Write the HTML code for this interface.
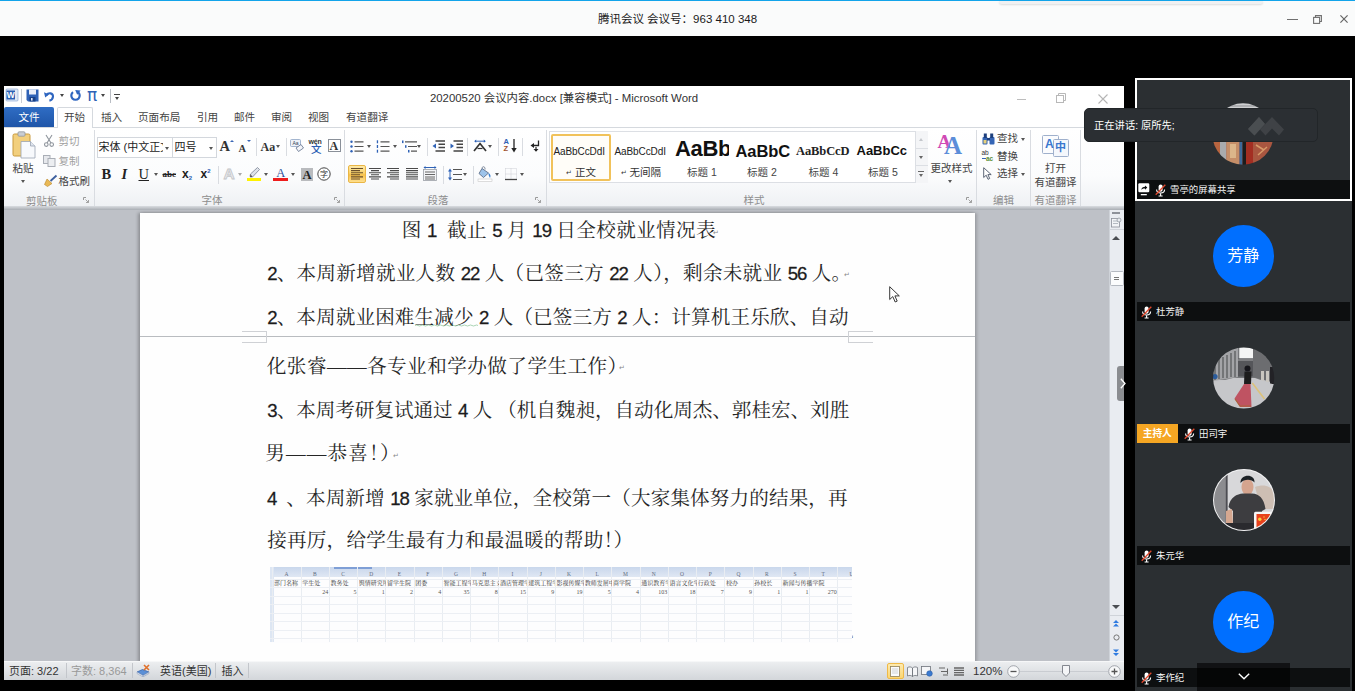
<!DOCTYPE html>
<html lang="zh-CN">
<head>
<meta charset="utf-8">
<title>腾讯会议</title>
<style>
*{box-sizing:border-box;margin:0;padding:0}
html,body{width:1355px;height:691px;overflow:hidden;background:#000}
body{position:relative;font-family:"Liberation Sans","Noto Sans CJK SC",sans-serif;color:#222}
.abs{position:absolute}
/* ---------- Tencent meeting title bar ---------- */
#tbar{position:absolute;left:0;top:0;width:1355px;height:36px;background:#fafbfb;border-top:1px solid #12a4ea}
#tbar .ttl{position:absolute;left:0;width:1355px;top:11px;text-align:center;font-size:11.5px;line-height:14px;color:#1a1a1a;letter-spacing:0}
#tbar svg{position:absolute;top:0;left:0}
/* ---------- Word window ---------- */
#word{position:absolute;left:4px;top:86px;width:1120px;height:594px;background:#fff;overflow:hidden}
#wtitle{position:absolute;left:0;top:0;width:1120px;height:21px;background:#fff}
#wtitle .t{position:absolute;left:0;width:1120px;text-align:center;top:4.5px;font-size:11.4px;line-height:14px;color:#333}
#tabs{position:absolute;left:0;top:21px;width:1120px;height:21px;background:#fff;border-bottom:1px solid #d5d9de}
#tabs span{position:absolute;top:3.2px;font-size:10.6px;line-height:14px;color:#444;white-space:nowrap}
#filetab{position:absolute;left:0;top:0;width:50px;height:20px;background:linear-gradient(#2f6dc4,#1f55a8);border-radius:2px 2px 0 0}
#hometab{position:absolute;left:53px;top:0;width:36px;height:22px;background:#fff;border:1px solid #d5d9de;border-bottom:none;border-radius:2px 2px 0 0}
#ribbon{position:absolute;left:0;top:42px;width:1120px;height:80px;background:linear-gradient(#ffffff 0%,#fbfcfd 60%,#eef0f3 100%)}
#ribbon .sep{position:absolute;top:2px;width:1px;height:74px;background:#dde0e4}
#ribbon .gl{position:absolute;top:65px;font-size:11px;line-height:13px;color:#888;white-space:nowrap}
#ribbon .tx{position:absolute;font-size:11.5px;line-height:14px;color:#444;white-space:nowrap}
#ribbot{position:absolute;left:0;top:120px;width:1120px;height:4px;background:linear-gradient(#d9dce0,#a9adb3)}
/* document */
#doc{position:absolute;left:0;top:124px;width:1105px;height:451px;background:#bec1c7}
#page{position:absolute;left:136px;top:3px;width:835px;height:460px;background:#fefefe;box-shadow:-2px 0 3px rgba(0,0,0,.25),2px 0 3px rgba(0,0,0,.18)}
.ln{position:absolute;white-space:nowrap;font-family:"Liberation Serif","Noto Serif CJK SC",serif;font-size:19.6px;line-height:30px;height:30px;color:#262626;font-weight:400}
.ln b.h{font-weight:400;margin-right:-0.5em}
.ln i.d{font-style:normal;font-family:"Liberation Sans",sans-serif;font-size:18.6px;font-weight:400;-webkit-text-stroke:0.28px #1c1c1c;color:#1c1c1c;white-space:pre;letter-spacing:-1px;word-spacing:1.2px}
#vscroll{position:absolute;left:1105px;top:124px;width:15px;height:451px;background:#e9ecf1;border-left:1px solid #cfd3d9}
#status{position:absolute;left:0;top:575px;width:1120px;height:19px;background:linear-gradient(#eceef0,#d3d6da);border-top:1px solid #f6f7f8}
#status span{position:absolute;top:2px;font-size:11px;line-height:14px;color:#333;white-space:nowrap}
/* ---------- side panel ---------- */
#side{position:absolute;left:1134.5px;top:78px;width:217.5px;height:613px;background:#2b2f32;overflow:hidden}
.tile{position:absolute;left:0;width:217.5px;height:122px}
.nb{position:absolute;left:2px;width:213.500px;height:19px;background:#0d0f10;top:102px}
.nb span{position:absolute;top:3px;font-size:9.400px;line-height:13px;color:#f4f4f4;white-space:nowrap;font-weight:400}
.nb .mic{position:absolute}
.host{position:absolute;left:0;top:0;width:41.500px;height:19px;background:#f5a623;color:#fff;font-size:9.700px;line-height:19px;text-align:center;font-weight:700}
.avs{position:absolute}
.av{position:absolute;left:78px;top:147px;width:61.500px;height:61.500px;border-radius:50%;overflow:hidden}
.av.blue{top:25px;background:#006fff;color:#fff;font-size:16px;line-height:62px;text-align:center}
#t1b{position:absolute;left:0;top:0;width:217.500px;height:122.500px;border:2px solid #fff}
#more{position:absolute;left:62px;top:585px;width:93.500px;height:28px;background:rgba(0,0,0,.6)}
#tip{position:absolute;left:1083.5px;top:108px;width:234px;height:33.500px;background:#2b2f33;border:1px solid #222629;border-radius:5px;color:#fff;font-size:10.300px;line-height:33px;padding-left:9.500px}
/* ribbon overlay: absolute screen coordinates */
#rb{position:absolute;left:0;top:0;width:1355px;height:691px;pointer-events:none}
#rb .t{position:absolute;font-size:10.5px;line-height:13px;color:#444;white-space:nowrap}
#rb .g{color:#8d8d8d}
#rb .s{position:absolute;width:1px;background:#d9dce1}
#rb svg{position:absolute;overflow:visible}
#rb .ar{position:absolute;width:0;height:0;border-left:2.5px solid transparent;border-right:2.5px solid transparent;border-top:3px solid #555}
#rb .bx{position:absolute}

#pgline{position:absolute;left:140px;top:336px;width:835px;height:1px;background:#b9bcc0}
.crop{position:absolute;height:7px;border:1px solid #c6c8cc;border-top:none;background:transparent}
#vs .b{position:absolute}
.pm{font-size:7px;line-height:8px;color:#888;font-family:"DejaVu Sans",sans-serif}
</style>
</head>
<body>
<!-- Tencent Meeting title bar -->
<div id="tbar">
  <div class="ttl">腾讯会议 会议号：963 410 348</div>
  <div style="position:absolute;left:999px;top:0;width:264px;height:3px;border-radius:0 0 4px 4px;background:#f0f1f2;box-shadow:0 1px 2px rgba(0,0,0,.12)"></div>
  <div style="position:absolute;left:1287px;top:17.500px;width:10.500px;height:1.400px;background:#707070"></div>
  <svg style="left:1313px;top:13.500px" width="9" height="9" viewBox="0 0 9 9"><path d="M2.500 2.300V0.600H8.400V6.500H6.700" fill="none" stroke="#707070" stroke-width="1.100"/><rect x="0.600" y="2.400" width="6" height="6" fill="none" stroke="#707070" stroke-width="1.100"/></svg>
  <svg style="left:1339.500px;top:14px" width="8" height="8" viewBox="0 0 8 8"><path d="M0.400 0.400L7.600 7.600M7.600 0.400L0.400 7.600" stroke="#666" stroke-width="1.200"/></svg>
</div>

<!-- Word window -->
<div id="word">
  <div id="wtitle"><div class="t">20200520 会议内容.docx [兼容模式] - Microsoft Word</div></div>
  <div id="tabs">
    <div id="filetab"></div><div id="hometab"></div>
    <span style="left:14.5px;color:#fff">文件</span>
    <span style="left:60px">开始</span>
    <span style="left:97px">插入</span>
    <span style="left:134px">页面布局</span>
    <span style="left:193px">引用</span>
    <span style="left:230px">邮件</span>
    <span style="left:267px">审阅</span>
    <span style="left:304px">视图</span>
    <span style="left:342px">有道翻译</span>
  </div>
  <div id="ribbon"></div>
  <div id="ribbot"></div>
  <div id="doc">
    <div id="page"></div>
  </div>
  <div id="vscroll"></div>
  <div id="status">
    <span style="left:5px">页面: 3/22</span>
    <span style="left:67px;color:#999">字数: 8,364</span>
    <span style="left:156px">英语(美国)</span>
    <span style="left:217.5px">插入</span>
  </div>
</div>

<!-- ribbon overlay -->
<div id="rb">
  <!-- quick access toolbar -->
  <svg style="left:6px;top:88.5px" width="12" height="12" viewBox="0 0 12 12"><rect x="0" y="0" width="12" height="12" rx="1" fill="#dfe8f5" stroke="#7f9fd0" stroke-width=".6"/><rect x="0.5" y="1.5" width="8.5" height="9" fill="#2b5fb4"/><text x="4.7" y="9.3" font-size="8.5" font-weight="700" fill="#fff" text-anchor="middle" font-family="Liberation Sans, sans-serif">W</text></svg>
  <div class="s" style="left:21px;top:89px;height:14px;background:#c9cdd3"></div>
  <svg style="left:25.5px;top:88.5px" width="13" height="13" viewBox="0 0 13 13"><path d="M0.5 0.5H12.5V12.5H2L0.5 11Z" fill="#2f62b6"/><rect x="3" y="0.5" width="7" height="5" fill="#e9eef8"/><rect x="3.5" y="8" width="6" height="4.5" fill="#173f86"/><rect x="5" y="9" width="1.6" height="2.6" fill="#dfe7f5"/></svg>
  <svg style="left:44px;top:90.5px" width="11" height="10" viewBox="0 0 11 10"><path d="M2.2 4.2C4.5 1.2 9.2 1.8 9 5.6C8.8 7.8 7.2 9.2 5.4 9.6" fill="none" stroke="#2f66c0" stroke-width="2.1"/><path d="M0 1.2L5 3.4L1.2 6.6Z" fill="#2f66c0"/></svg>
  <div class="ar" style="left:59.5px;top:94px;border-top-color:#444"></div>
  <svg style="left:69.5px;top:90px" width="11" height="11" viewBox="0 0 11 11"><path d="M3 2.2A4.2 4.2 0 1 0 8 2.2" fill="none" stroke="#2f66c0" stroke-width="2.2"/><path d="M5.2 0L10.6 0.6L7.2 4.8Z" fill="#2f66c0"/></svg>
  <div class="t" style="left:87px;top:86.5px;font-size:17px;line-height:17px;color:#2f62b6;font-weight:400;font-family:'DejaVu Sans','Liberation Sans',sans-serif">π</div>
  <div class="ar" style="left:101px;top:94px;border-top-color:#444"></div>
  <div class="s" style="left:109.5px;top:89px;height:14px;background:#b9bdc4"></div>
  <div class="bx" style="left:114px;top:94px;width:6px;height:1.2px;background:#444"></div>
  <div class="ar" style="left:114.5px;top:96.5px;border-top-color:#444"></div>

  <!-- window controls of Word -->
  <div class="bx" style="left:1017px;top:98.5px;width:9px;height:1px;background:#bdbdbd"></div>
  <svg style="left:1056px;top:93px" width="10" height="10" viewBox="0 0 10 10"><rect x="0.5" y="2.5" width="7" height="7" fill="#fff" stroke="#b8b8b8"/><path d="M2.5 2.5V0.5H9.5V7.5H7.5" fill="none" stroke="#b8b8b8"/></svg>
  <svg style="left:1098px;top:94px" width="10" height="10" viewBox="0 0 10 10"><path d="M0.5 0.5L9.5 9.5M9.5 0.5L0.5 9.5" stroke="#b5b5b5" stroke-width="1.1"/></svg>

  <!-- clipboard group -->
  <svg style="left:12px;top:131px" width="24" height="28" viewBox="0 0 24 28"><rect x="1" y="3" width="17" height="22" rx="1.5" fill="#f2cf7d" stroke="#c99a3c"/><rect x="6" y="0.8" width="7" height="4.4" rx="1" fill="#c9cdd3" stroke="#8a8f98" stroke-width=".7"/><path d="M9 10.5H18.5L23 15V27H9Z" fill="#f7f9fc" stroke="#9aa3b3" stroke-width=".8"/><path d="M18.5 10.5V15H23" fill="#dfe5ee" stroke="#9aa3b3" stroke-width=".8"/></svg>
  <div class="t" style="left:12.5px;top:162px">粘贴</div>
  <div class="ar" style="left:21px;top:180px"></div>
  <svg style="left:44px;top:135px" width="10" height="12" viewBox="0 0 10 12"><path d="M2 0L7 8M8 0L3 8" stroke="#8e949c" stroke-width="1.1" fill="none"/><circle cx="2.3" cy="9.6" r="1.8" fill="none" stroke="#8e949c" stroke-width="1.1"/><circle cx="7.7" cy="9.6" r="1.8" fill="none" stroke="#8e949c" stroke-width="1.1"/></svg>
  <div class="t g" style="left:58.5px;top:134.5px;color:#a0a0a0">剪切</div>
  <svg style="left:43px;top:155px" width="13" height="12" viewBox="0 0 13 12"><rect x="0.5" y="0.5" width="6.5" height="8" fill="#e6e8ec" stroke="#a9aeb6"/><rect x="5" y="3.5" width="7" height="8" fill="#eceef1" stroke="#a9aeb6"/></svg>
  <div class="t g" style="left:58.5px;top:155px;color:#a0a0a0">复制</div>
  <svg style="left:44px;top:174.500px" width="13" height="12" viewBox="0 0 13 12"><path d="M12.5 0.5L6.5 6" stroke="#3c5f9e" stroke-width="1.8"/><path d="M3 4L8 8.5L3.5 11.5L0.5 9.5Z" fill="#e9b956" stroke="#b88426" stroke-width=".6"/></svg>
  <div class="t" style="left:58.5px;top:174.500px">格式刷</div>
  <div class="t g" style="left:26px;top:194.500px">剪贴板</div>
  <svg class="la" style="left:83px;top:196.500px" width="6" height="6" viewBox="0 0 6 6"><path d="M0.5 3V0.5H3" fill="none" stroke="#9a9a9a"/><path d="M2.5 2.5L5.5 5.5M5.5 3V5.5H3" fill="none" stroke="#9a9a9a" stroke-width=".9"/></svg>
  <div class="s" style="left:93.5px;top:130px;height:76px"></div>

  <!-- font group -->
  <div class="bx" style="left:97px;top:137px;width:120px;height:21px;background:#fff;border:1px solid #d3d7dd"></div>
  <div class="bx" style="left:172px;top:137px;width:1px;height:21px;background:#d3d7dd"></div>
  <div class="t" style="left:98.500px;top:141px;font-size:11px;color:#222">宋体 (中文正文</div>
  <div class="bx" style="left:163px;top:138px;width:9px;height:19px;background:#fff"></div>
  <div class="ar" style="left:165px;top:146.500px"></div>
  <div class="t" style="left:174.500px;top:141px;font-size:11px;color:#222">四号</div>
  <div class="ar" style="left:209px;top:146.500px"></div>
  <div class="t" style="left:219.500px;top:138px;font-family:'Liberation Serif',serif;font-weight:700;font-size:14.500px;line-height:17px;color:#333">A</div>
  <div class="bx" style="left:229.500px;top:139.500px;width:0;height:0;border-left:2px solid transparent;border-right:2px solid transparent;border-bottom:2.5px solid #3a66b5"></div>
  <div class="t" style="left:238.500px;top:141.500px;font-family:'Liberation Serif',serif;font-weight:700;font-size:10.500px;line-height:13px;color:#333">A</div>
  <div class="bx" style="left:246.500px;top:139.500px;width:0;height:0;border-left:2px solid transparent;border-right:2px solid transparent;border-top:2.5px solid #3a66b5"></div>
  <div class="s" style="left:255.500px;top:138px;height:18px"></div>
  <div class="t" style="left:260.500px;top:139.500px;font-family:'Liberation Serif',serif;font-weight:700;font-size:12px;line-height:15px;color:#333">Aa</div>
  <div class="ar" style="left:275.500px;top:145px"></div>
  <div class="s" style="left:285.500px;top:138px;height:18px"></div>
  <svg style="left:290px;top:138.500px" width="14" height="14" viewBox="0 0 14 14"><rect x="0.5" y="0.5" width="10" height="7" rx="1" fill="#eef2f8" stroke="#8ea3c4" stroke-width=".8"/><text x="5.500" y="6" font-size="5" text-anchor="middle" fill="#345" font-family="Liberation Sans, sans-serif">Aa</text><path d="M6 9L11 5.500L13.500 9L8.500 12.500Z" fill="#f4f6fa" stroke="#6d7c95" stroke-width=".9"/></svg>
  <div class="t" style="left:308.500px;top:137.500px;font-size:7px;line-height:8px;color:#333;font-weight:700;letter-spacing:-.2px">wén</div>
  <div class="t" style="left:311px;top:143.500px;font-size:10.500px;line-height:11px;color:#2b5fb4;font-weight:500">文</div>
  <div class="bx" style="left:327.500px;top:139px;width:13px;height:13px;border:1px solid #8a9099;background:#fff"></div>
  <div class="t" style="left:329.500px;top:138.500px;font-family:'Liberation Serif',serif;font-weight:700;font-size:12px;line-height:14px;color:#333">A</div>

  <div class="t" style="left:101.500px;top:165px;font-family:'Liberation Serif',serif;font-weight:700;font-size:14.500px;line-height:18px;color:#222">B</div>
  <div class="t" style="left:121.500px;top:165px;font-family:'Liberation Serif',serif;font-style:italic;font-weight:700;font-size:14.500px;line-height:18px;color:#222">I</div>
  <div class="t" style="left:138.500px;top:165px;font-family:'Liberation Serif',serif;font-size:14.500px;line-height:18px;color:#222;text-decoration:underline">U</div>
  <div class="ar" style="left:153.500px;top:173px"></div>
  <div class="t" style="left:162.500px;top:168px;font-family:'Liberation Serif',serif;font-weight:700;font-size:9px;line-height:12px;color:#222;text-decoration:line-through">abc</div>
  <div class="t" style="left:182px;top:167px;font-weight:700;font-size:12px;line-height:14px;color:#222">x<span style="font-size:6px;color:#2b5fb4;position:relative;top:2px">2</span></div>
  <div class="t" style="left:200.500px;top:167px;font-weight:700;font-size:12px;line-height:14px;color:#222">x<span style="font-size:6px;color:#2b5fb4;position:relative;top:-5px">2</span></div>
  <div class="s" style="left:218px;top:166px;height:18px"></div>
  <div class="t" style="left:223.500px;top:164.500px;font-weight:700;font-size:15.500px;line-height:18px;color:#e9eaec;-webkit-text-stroke:0.8px #c4c6ca">A</div>
  <div class="ar" style="left:238px;top:173px;border-top-color:#aaa"></div>
  <svg style="left:247px;top:166.500px" width="14" height="11" viewBox="0 0 14 11"><path d="M3 9.500L5.500 10L12.500 2.500L10.500 0.500L3.500 7Z" fill="#dfe3ea" stroke="#7b8494" stroke-width=".8"/><path d="M3.500 7L5.500 10L3 10.200Z" fill="#555"/></svg>
  <div class="bx" style="left:246.500px;top:177.500px;width:14.500px;height:3.500px;background:#fff200"></div>
  <div class="ar" style="left:264px;top:173px"></div>
  <div class="t" style="left:276.300px;top:165.500px;font-family:'Liberation Serif',serif;font-size:12.500px;line-height:14px;color:#2b4f9a">A</div>
  <div class="bx" style="left:273px;top:177.500px;width:14.500px;height:3.500px;background:#ee1c1c"></div>
  <div class="ar" style="left:290.500px;top:173px"></div>
  <div class="bx" style="left:300.500px;top:168px;width:12.500px;height:13px;background:#b9bbbe"></div>
  <div class="t" style="left:302.500px;top:167.500px;font-family:'Liberation Serif',serif;font-weight:700;font-size:12.500px;line-height:14px;color:#222">A</div>
  <svg style="left:317px;top:166.700px" width="14" height="14" viewBox="0 0 14 14"><circle cx="7" cy="7" r="6.200" fill="#fff" stroke="#444" stroke-width="1"/><text x="7" y="10" font-size="8" text-anchor="middle" fill="#333" font-family="Noto Sans CJK SC, sans-serif">字</text></svg>
  <div class="t g" style="left:201.500px;top:194px">字体</div>
  <svg class="la" style="left:334px;top:196.500px" width="6" height="6" viewBox="0 0 6 6"><path d="M0.500 3V0.500H3" fill="none" stroke="#9a9a9a"/><path d="M2.500 2.500L5.500 5.500M5.500 3V5.500H3" fill="none" stroke="#9a9a9a" stroke-width=".9"/></svg>
  <div class="s" style="left:343.500px;top:130px;height:76px"></div>

  <!-- paragraph group -->
  <svg style="left:349.500px;top:139.500px" width="14" height="13" viewBox="0 0 14 13"><g fill="#2f62b6"><circle cx="1.500" cy="1.800" r="1.200"/><circle cx="1.500" cy="6.500" r="1.200"/><circle cx="1.500" cy="11.200" r="1.200"/></g><path d="M4.500 1.800H13.500M4.500 6.500H13.500M4.500 11.200H13.500" stroke="#555" stroke-width="1.200"/></svg>
  <div class="ar" style="left:367px;top:145px"></div>
  <svg style="left:375.500px;top:139.500px" width="14" height="13" viewBox="0 0 14 13"><g fill="#2f62b6"><rect x="0.800" y="0.300" width="1.300" height="3"/><rect x="0.800" y="5" width="1.300" height="3"/><rect x="0.800" y="9.700" width="1.300" height="3"/></g><path d="M4.500 1.800H13.500M4.500 6.500H13.500M4.500 11.200H13.500" stroke="#555" stroke-width="1.200"/></svg>
  <div class="ar" style="left:393px;top:145px"></div>
  <svg style="left:401.500px;top:139.500px" width="16" height="13" viewBox="0 0 16 13"><g fill="#2f62b6"><rect x="0" y="0.500" width="1.500" height="2.600"/><rect x="3" y="5.200" width="1.500" height="2.600"/><rect x="6" y="9.900" width="1.500" height="2.600"/></g><path d="M3 1.800H15M6 6.500H15M9 11.200H15" stroke="#555" stroke-width="1.200"/></svg>
  <div class="ar" style="left:416.500px;top:145px"></div>
  <div class="s" style="left:426.500px;top:138px;height:18px"></div>
  <svg style="left:432px;top:140px" width="13" height="12" viewBox="0 0 13 12"><path d="M3.500 1H13M6.500 4.300H13M6.500 7.600H13M3.500 11H13" stroke="#444" stroke-width="1.500"/><path d="M4 3.500V8.500L0.500 6Z" fill="#2f62b6"/></svg>
  <svg style="left:449.500px;top:140px" width="13" height="12" viewBox="0 0 13 12"><path d="M3.500 1H13M6.500 4.300H13M6.500 7.600H13M3.500 11H13" stroke="#444" stroke-width="1.500"/><path d="M0.500 3.500V8.500L4 6Z" fill="#2f62b6"/></svg>
  <div class="s" style="left:467px;top:138px;height:18px"></div>
  <svg style="left:472.500px;top:139px" width="14" height="13" viewBox="0 0 14 13"><path d="M1 12L7 4.500L13 12" fill="none" stroke="#333" stroke-width="1.700"/><path d="M4.500 9.500H9.500" stroke="#333" stroke-width="1.200"/><path d="M2 2.200H12" stroke="#2f62b6" stroke-width="1"/><path d="M3.200 0.600L1.200 2.200L3.200 3.800ZM10.800 0.600L12.800 2.200L10.800 3.800Z" fill="#2f62b6"/></svg>
  <div class="ar" style="left:488px;top:145px"></div>
  <div class="s" style="left:497.500px;top:138px;height:18px"></div>
  <div class="t" style="left:503.500px;top:137.500px;font-size:7.500px;line-height:8px;font-weight:700;color:#2f62b6">A</div>
  <div class="t" style="left:503.500px;top:145px;font-size:7.500px;line-height:8px;font-weight:700;color:#a0522d">Z</div>
  <svg style="left:510.500px;top:139px" width="6" height="14" viewBox="0 0 6 14"><path d="M3 0V10" stroke="#222" stroke-width="1.300"/><path d="M0.300 9L5.700 9L3 13.500Z" fill="#222"/></svg>
  <div class="s" style="left:522px;top:138px;height:18px"></div>
  <svg style="left:530px;top:140px" width="10" height="12" viewBox="0 0 10 12"><path d="M8.500 0.500V5.500H3" fill="none" stroke="#222" stroke-width="1.300"/><path d="M0.500 5.500L4 3V8Z" fill="#222"/><path d="M6 11V7" stroke="#222" stroke-width="1.200"/><path d="M3.500 9L6 11.800L8.500 9Z" fill="#222"/></svg>

  <div class="bx" style="left:347.500px;top:165px;width:18.500px;height:17.500px;border:1px solid #eab645;border-radius:2px;background:linear-gradient(#fde9a8,#fbd36b 45%,#f9c24a 55%,#fddf8f)"></div>
  <svg style="left:350.500px;top:168px" width="13" height="12" viewBox="0 0 13 12"><path d="M0 0.500H12M0 2.600H9M0 4.700H12M0 6.800H9M0 8.900H12M0 11H9" stroke="#6a4f2a" stroke-width="1.100"/></svg>
  <svg style="left:368.500px;top:168px" width="13" height="12" viewBox="0 0 13 12"><path d="M0 0.500H12M2 2.600H10M0 4.700H12M2 6.800H10M0 8.900H12M2 11H10" stroke="#4a4a4a" stroke-width="1.100"/></svg>
  <svg style="left:387px;top:168px" width="13" height="12" viewBox="0 0 13 12"><path d="M0 0.500H12M3 2.600H12M0 4.700H12M3 6.800H12M0 8.900H12M3 11H12" stroke="#4a4a4a" stroke-width="1.100"/></svg>
  <svg style="left:405.500px;top:168px" width="13" height="12" viewBox="0 0 13 12"><path d="M0 0.500H12M0 2.600H12M0 4.700H12M0 6.800H12M0 8.900H12M0 11H12" stroke="#4a4a4a" stroke-width="1.100"/></svg>
  <svg style="left:423px;top:166px" width="14" height="15" viewBox="0 0 14 15"><rect x="0.500" y="3.500" width="13" height="11" fill="#f3f4f6" stroke="#9a9ea6" stroke-width=".8"/><path d="M2 6H12M2 8.500H12M2 11H12M2 13H12" stroke="#666" stroke-width="1"/><path d="M1 1.500H13" stroke="#2f62b6" stroke-width="1"/><path d="M2.500 0L0.500 1.500L2.500 3ZM11.500 0L13.500 1.500L11.500 3Z" fill="#2f62b6"/></svg>
  <div class="s" style="left:442.500px;top:166px;height:18px"></div>
  <svg style="left:448px;top:167.500px" width="14" height="13" viewBox="0 0 14 13"><path d="M5 1.500H14M5 6.500H14M5 11.500H14" stroke="#555" stroke-width="1.200"/><path d="M2 2.500V10.500" stroke="#2f62b6" stroke-width="1"/><path d="M0 3.500L2 0.500L4 3.500ZM0 9.500L2 12.500L4 9.500Z" fill="#2f62b6"/></svg>
  <div class="ar" style="left:463px;top:173px"></div>
  <div class="s" style="left:472.500px;top:166px;height:18px"></div>
  <svg style="left:477.500px;top:166px" width="15" height="16" viewBox="0 0 15 16"><path d="M4 2.500L10.500 7L5.500 11.500L1 7.500Z" fill="#9cc3ea" stroke="#5f6f8a" stroke-width=".9"/><path d="M4 2.500C4 0 7.500 0 7 3.500" fill="none" stroke="#6f7b8f" stroke-width=".9"/><path d="M10.500 7C12.500 8 13 10 12 12C11 10.500 10.500 9 10.500 7Z" fill="#3a7fd0"/><rect x="0" y="13" width="14" height="2.500" fill="#fff" stroke="#bbb" stroke-width=".5"/></svg>
  <div class="ar" style="left:494.500px;top:173px"></div>
  <svg style="left:504.500px;top:168px" width="12" height="12" viewBox="0 0 12 12"><path d="M0.500 0.500H11.500V11.500M0.500 0.500V11.500M6 0.500V11.500M0.500 6H11.500" fill="none" stroke="#c9ccd2" stroke-width=".9" stroke-dasharray="1 1"/><path d="M0 11.500H12" stroke="#444" stroke-width="1.300"/></svg>
  <div class="ar" style="left:519.500px;top:173px"></div>
  <div class="t g" style="left:427.500px;top:194px">段落</div>
  <svg class="la" style="left:535px;top:196.500px" width="6" height="6" viewBox="0 0 6 6"><path d="M0.500 3V0.500H3" fill="none" stroke="#9a9a9a"/><path d="M2.500 2.500L5.500 5.500M5.500 3V5.500H3" fill="none" stroke="#9a9a9a" stroke-width=".9"/></svg>
  <div class="s" style="left:545.500px;top:130px;height:76px"></div>

  <!-- styles gallery -->
  <div class="bx" style="left:549px;top:130.500px;width:379px;height:52.500px;background:#fff;border:1px solid #dcdfe4"></div>
  <div class="bx" style="left:550.500px;top:134px;width:60px;height:46.500px;border:2px solid #f1c25a;border-radius:2px;background:#fffdf8"></div>
  <div class="t" style="left:553.500px;top:144.500px;font-size:10px;line-height:13px;color:#222;letter-spacing:-.1px">AaBbCcDdI</div>
  <div class="t" style="left:566px;top:166px;color:#333"><span style="font-size:7px;position:relative;top:-1px">↵</span> 正文</div>
  <div class="t" style="left:614.500px;top:144.500px;font-size:10px;line-height:13px;color:#222;letter-spacing:-.1px">AaBbCcDdI</div>
  <div class="t" style="left:620.500px;top:166px;color:#333"><span style="font-size:7px;position:relative;top:-1px">↵</span> 无间隔</div>
  <div class="bx" style="left:674px;top:132px;width:54.500px;height:34px;overflow:hidden"><div class="t" style="left:1px;top:2px;font-size:22px;line-height:30px;font-weight:700;color:#111;letter-spacing:-.3px">AaBb</div></div>
  <div class="t" style="left:687px;top:166px;color:#444">标题 1</div>
  <div class="bx" style="left:734px;top:134px;width:55.500px;height:32px;overflow:hidden"><div class="t" style="left:1.500px;top:5px;font-size:16.500px;line-height:24px;font-weight:700;color:#111;letter-spacing:-.1px">AaBbC</div></div>
  <div class="t" style="left:747px;top:166px;color:#444">标题 2</div>
  <div class="t" style="left:796px;top:143px;font-size:12.500px;line-height:16px;font-weight:700;color:#222;font-family:'Liberation Serif',serif;letter-spacing:-.1px">AaBbCcD</div>
  <div class="t" style="left:808.500px;top:166px;color:#444">标题 4</div>
  <div class="t" style="left:856.500px;top:143px;font-size:13px;line-height:16px;font-weight:700;color:#111">AaBbCc</div>
  <div class="t" style="left:868px;top:166px;color:#444">标题 5</div>
  <div class="bx" style="left:914.500px;top:131px;width:13px;height:51.500px;background:#f4f5f7;border-left:1px solid #dcdfe4"></div>
  <div class="bx" style="left:914.500px;top:148px;width:13px;height:1px;background:#dcdfe4"></div>
  <div class="bx" style="left:914.500px;top:165px;width:13px;height:1px;background:#dcdfe4"></div>
  <div class="bx" style="left:918.500px;top:138px;width:0;height:0;border-left:2.500px solid transparent;border-right:2.500px solid transparent;border-bottom:3px solid #c4c7cc"></div>
  <div class="ar" style="left:918.500px;top:155.500px;border-top-color:#666"></div>
  <div class="bx" style="left:918px;top:171px;width:6px;height:1.200px;background:#666"></div>
  <div class="ar" style="left:918.500px;top:173.500px;border-top-color:#666"></div>
  <!-- change styles -->
  <div class="t" style="left:937.500px;top:131px;font-size:19px;line-height:22px;font-weight:700;color:#d04ab5;font-family:'Liberation Serif',serif">A</div>
  <div class="t" style="left:944px;top:132px;font-size:25px;line-height:28px;font-weight:700;color:#5b8dd9;font-family:'Liberation Serif',serif">A</div>
  <div class="t" style="left:930.500px;top:161.500px">更改样式</div>
  <div class="ar" style="left:948px;top:180px"></div>
  <div class="t g" style="left:743.500px;top:194px">样式</div>
  <svg class="la" style="left:965.500px;top:196.500px" width="6" height="6" viewBox="0 0 6 6"><path d="M0.500 3V0.500H3" fill="none" stroke="#9a9a9a"/><path d="M2.500 2.500L5.500 5.500M5.500 3V5.500H3" fill="none" stroke="#9a9a9a" stroke-width=".9"/></svg>
  <div class="s" style="left:976px;top:130px;height:76px"></div>
  <!-- editing -->
  <svg style="left:981.500px;top:132.500px" width="13" height="12" viewBox="0 0 13 12"><rect x="0.500" y="4" width="5" height="7.500" rx="1" fill="#3565b5"/><rect x="7.500" y="4" width="5" height="7.500" rx="1" fill="#3565b5"/><rect x="1.800" y="0.500" width="3" height="4.500" fill="#1d3f7d"/><rect x="8.200" y="0.500" width="3" height="4.500" fill="#1d3f7d"/><rect x="5" y="5" width="3" height="2.500" fill="#1d3f7d"/><rect x="1.500" y="7" width="3" height="3.500" fill="#e9d27a"/></svg>
  <div class="t" style="left:997px;top:132px">查找</div>
  <div class="ar" style="left:1020.500px;top:137.500px"></div>
  <div class="t" style="left:981.500px;top:149px;font-size:6.500px;line-height:7px;color:#333">ab</div>
  <div class="t" style="left:986px;top:154.500px;font-size:6.500px;line-height:7px;font-weight:700;color:#5a8f3a">ac</div>
  <div class="bx" style="left:982px;top:158px;width:3.500px;height:1px;background:#3565b5"></div>
  <div class="t" style="left:997px;top:149.500px">替换</div>
  <svg style="left:982.500px;top:167px" width="9" height="13" viewBox="0 0 9 13"><path d="M0.700 0.700V10.500L3.200 8.200L5 12.300L6.700 11.500L4.900 7.600H8.200Z" fill="#fff" stroke="#4a5568" stroke-width=".9"/></svg>
  <div class="t" style="left:997px;top:167px">选择</div>
  <div class="ar" style="left:1021px;top:172.500px"></div>
  <div class="t g" style="left:993px;top:194px">编辑</div>
  <div class="s" style="left:1029.500px;top:130px;height:76px"></div>
  <!-- youdao -->
  <div class="bx" style="left:1042px;top:135px;width:17px;height:18.500px;background:#fbfcfe;border:1px solid #9fb0cc;border-radius:1.500px"></div>
  <div class="bx" style="left:1053px;top:138.500px;width:15.500px;height:18px;background:#f4f7fc;border:1px solid #9fb0cc;border-radius:1.500px"></div>
  <div class="t" style="left:1045px;top:137.500px;font-size:12px;line-height:13px;font-weight:700;color:#3a77cf">A</div>
  <div class="t" style="left:1055px;top:140.500px;font-size:11px;line-height:13px;font-weight:700;color:#3a77cf">中</div>
  <div class="t" style="left:1045px;top:162px">打开</div>
  <div class="t" style="left:1034.500px;top:176px">有道翻译</div>
  <div class="t g" style="left:1034.500px;top:194px">有道翻译</div>
  <div class="s" style="left:1080px;top:130px;height:76px"></div>
</div>

<!-- document text (absolute screen coords) -->
<div id="dt">
  <div class="ln" style="left:401.7px;top:216px;letter-spacing:0.358px">图<i class="d"> 1 </i> 截止<i class="d"> 5 </i>月<i class="d"> 19 </i>日全校就业情况表</div>
  <div class="ln" style="left:267.3px;top:259px;letter-spacing:0.258px"><i class="d">2</i>、本周新增就业人数<i class="d"> 22 </i>人（已签三方<i class="d"> 22 </i>人），剩余未就业<i class="d"> 56 </i>人。</div>
  <div class="ln" style="left:267.3px;top:303px;letter-spacing:0.104px"><i class="d">2</i>、本周就业困难生减少<i class="d"> 2 </i>人（已签三方<i class="d"> 2 </i>人：计算机王乐欣、自动</div>
  <div class="ln" style="left:266.8px;top:351.5px;letter-spacing:0.453px">化张睿——各专业和学办做了学生工作）</div>
  <div class="ln" style="left:267.3px;top:396px;letter-spacing:-0.036px"><i class="d">3</i>、本周考研复试通过<i class="d"> 4 </i>人 （机自魏昶，自动化周杰、郭桂宏、刘胜</div>
  <div class="ln" style="left:265.3px;top:439px;letter-spacing:1.15px">男——恭喜<b class="h">！</b>）</div>
  <div class="ln" style="left:267px;top:483.5px;letter-spacing:0.115px"><i class="d" style="margin-right:4.5px">4 </i>、本周新增<i class="d"> 18 </i>家就业单位，全校第一（大家集体努力的结果，再</div>
  <div class="ln" style="left:267.3px;top:526px;letter-spacing:0.178px">接再厉，给学生最有力和最温暖的帮助<b class="h">！</b>）</div>
</div>

<div id="pgline"></div>
<div class="crop" style="left:242px;top:331px;width:24.5px;height:11.5px;border:1px solid #cfd1d5;border-left:none"></div>
<div class="crop" style="left:848px;top:331px;width:25px;height:11.5px;border:1px solid #cfd1d5;border-right:none"></div>
<svg class="abs" style="left:415px;top:324.2px" width="65" height="3" viewBox="0 0 65 3"><path d="M0 1.5 q1.5 -2 3 0 t3 0 t3 0 t3 0 t3 0 t3 0 t3 0 t3 0 t3 0 t3 0 t3 0 t3 0 t3 0 t3 0 t3 0 t3 0 t3 0 t3 0 t3 0 t3 0 t3 0" fill="none" stroke="#5fae72" stroke-width=".7" transform="translate(0 .75) scale(1 .5)"/></svg>
<div class="abs pm" style="left:713px;top:229px">↵</div>
<div class="abs pm" style="left:844px;top:271px">↵</div>
<div class="abs pm" style="left:619px;top:364px">↵</div>
<div class="abs pm" style="left:393px;top:452px">↵</div>
<div class="abs pm" style="left:848px;top:634px;color:#555">↵</div>
<div id="sheet" style="position:absolute;left:270px;top:567px;width:582px;height:75.5px;background:#fdfdfe;overflow:hidden;font-family:'Liberation Serif','Noto Serif CJK SC',serif">
<div style="position:absolute;left:0;top:0;width:582px;height:9.5px;background:linear-gradient(#c9d7ec,#dfe7f3)"></div>
<div style="position:absolute;left:0;top:0;width:4px;height:75px;background:#dde6f3"></div>
<div style="position:absolute;left:64.4px;top:0;width:38px;height:1.5px;background:#7f9fd6"></div>
<div style="position:absolute;left:2.4px;top:0;width:1px;height:75px;background:#e9edf2"></div><div style="position:absolute;left:30.65px;top:0;width:1px;height:75px;background:#e9edf2"></div><div style="position:absolute;left:58.9px;top:0;width:1px;height:75px;background:#e9edf2"></div><div style="position:absolute;left:87.15px;top:0;width:1px;height:75px;background:#e9edf2"></div><div style="position:absolute;left:115.4px;top:0;width:1px;height:75px;background:#e9edf2"></div><div style="position:absolute;left:143.65px;top:0;width:1px;height:75px;background:#e9edf2"></div><div style="position:absolute;left:171.9px;top:0;width:1px;height:75px;background:#e9edf2"></div><div style="position:absolute;left:200.15px;top:0;width:1px;height:75px;background:#e9edf2"></div><div style="position:absolute;left:228.4px;top:0;width:1px;height:75px;background:#e9edf2"></div><div style="position:absolute;left:256.65px;top:0;width:1px;height:75px;background:#e9edf2"></div><div style="position:absolute;left:284.9px;top:0;width:1px;height:75px;background:#e9edf2"></div><div style="position:absolute;left:313.15px;top:0;width:1px;height:75px;background:#e9edf2"></div><div style="position:absolute;left:341.4px;top:0;width:1px;height:75px;background:#e9edf2"></div><div style="position:absolute;left:369.65px;top:0;width:1px;height:75px;background:#e9edf2"></div><div style="position:absolute;left:397.9px;top:0;width:1px;height:75px;background:#e9edf2"></div><div style="position:absolute;left:426.15px;top:0;width:1px;height:75px;background:#e9edf2"></div><div style="position:absolute;left:454.4px;top:0;width:1px;height:75px;background:#e9edf2"></div><div style="position:absolute;left:482.65px;top:0;width:1px;height:75px;background:#e9edf2"></div><div style="position:absolute;left:510.9px;top:0;width:1px;height:75px;background:#e9edf2"></div><div style="position:absolute;left:539.15px;top:0;width:1px;height:75px;background:#e9edf2"></div><div style="position:absolute;left:567.4px;top:0;width:1px;height:75px;background:#e9edf2"></div>
<div style="position:absolute;left:0;top:12px;width:582px;height:1px;background:#eceff4"></div><div style="position:absolute;left:0;top:20.45px;width:582px;height:1px;background:#eceff4"></div><div style="position:absolute;left:0;top:28.9px;width:582px;height:1px;background:#eceff4"></div><div style="position:absolute;left:0;top:37.35px;width:582px;height:1px;background:#eceff4"></div><div style="position:absolute;left:0;top:45.8px;width:582px;height:1px;background:#eceff4"></div><div style="position:absolute;left:0;top:54.25px;width:582px;height:1px;background:#eceff4"></div><div style="position:absolute;left:0;top:62.7px;width:582px;height:1px;background:#eceff4"></div><div style="position:absolute;left:0;top:71.15px;width:582px;height:1px;background:#eceff4"></div>
<div style="position:absolute;left:2.4px;top:4px;width:28.25px;text-align:center;font-size:5.5px;line-height:7px;color:#5f6b7e">A</div><div style="position:absolute;left:30.65px;top:4px;width:28.25px;text-align:center;font-size:5.5px;line-height:7px;color:#5f6b7e">B</div><div style="position:absolute;left:58.9px;top:4px;width:28.25px;text-align:center;font-size:5.5px;line-height:7px;color:#5f6b7e">C</div><div style="position:absolute;left:87.15px;top:4px;width:28.25px;text-align:center;font-size:5.5px;line-height:7px;color:#5f6b7e">D</div><div style="position:absolute;left:115.4px;top:4px;width:28.25px;text-align:center;font-size:5.5px;line-height:7px;color:#5f6b7e">E</div><div style="position:absolute;left:143.65px;top:4px;width:28.25px;text-align:center;font-size:5.5px;line-height:7px;color:#5f6b7e">F</div><div style="position:absolute;left:171.9px;top:4px;width:28.25px;text-align:center;font-size:5.5px;line-height:7px;color:#5f6b7e">G</div><div style="position:absolute;left:200.15px;top:4px;width:28.25px;text-align:center;font-size:5.5px;line-height:7px;color:#5f6b7e">H</div><div style="position:absolute;left:228.4px;top:4px;width:28.25px;text-align:center;font-size:5.5px;line-height:7px;color:#5f6b7e">I</div><div style="position:absolute;left:256.65px;top:4px;width:28.25px;text-align:center;font-size:5.5px;line-height:7px;color:#5f6b7e">J</div><div style="position:absolute;left:284.9px;top:4px;width:28.25px;text-align:center;font-size:5.5px;line-height:7px;color:#5f6b7e">K</div><div style="position:absolute;left:313.15px;top:4px;width:28.25px;text-align:center;font-size:5.5px;line-height:7px;color:#5f6b7e">L</div><div style="position:absolute;left:341.4px;top:4px;width:28.25px;text-align:center;font-size:5.5px;line-height:7px;color:#5f6b7e">M</div><div style="position:absolute;left:369.65px;top:4px;width:28.25px;text-align:center;font-size:5.5px;line-height:7px;color:#5f6b7e">N</div><div style="position:absolute;left:397.9px;top:4px;width:28.25px;text-align:center;font-size:5.5px;line-height:7px;color:#5f6b7e">O</div><div style="position:absolute;left:426.15px;top:4px;width:28.25px;text-align:center;font-size:5.5px;line-height:7px;color:#5f6b7e">P</div><div style="position:absolute;left:454.4px;top:4px;width:28.25px;text-align:center;font-size:5.5px;line-height:7px;color:#5f6b7e">Q</div><div style="position:absolute;left:482.65px;top:4px;width:28.25px;text-align:center;font-size:5.5px;line-height:7px;color:#5f6b7e">R</div><div style="position:absolute;left:510.9px;top:4px;width:28.25px;text-align:center;font-size:5.5px;line-height:7px;color:#5f6b7e">S</div><div style="position:absolute;left:539.15px;top:4px;width:28.25px;text-align:center;font-size:5.5px;line-height:7px;color:#5f6b7e">T</div><div style="position:absolute;left:567.4px;top:4px;width:28.25px;text-align:center;font-size:5.5px;line-height:7px;color:#5f6b7e">U</div>
<div style="position:absolute;left:3.9px;top:13px;width:27.25px;overflow:hidden;white-space:nowrap;font-size:6px;line-height:7px;color:#555;font-weight:500">部门名称</div><div style="position:absolute;left:32.15px;top:13px;width:27.25px;overflow:hidden;white-space:nowrap;font-size:6px;line-height:7px;color:#555;font-weight:500">学生处</div><div style="position:absolute;left:60.4px;top:13px;width:27.25px;overflow:hidden;white-space:nowrap;font-size:6px;line-height:7px;color:#555;font-weight:500">教务处</div><div style="position:absolute;left:88.65px;top:13px;width:27.25px;overflow:hidden;white-space:nowrap;font-size:6px;line-height:7px;color:#555;font-weight:500">舆情研究所</div><div style="position:absolute;left:116.9px;top:13px;width:27.25px;overflow:hidden;white-space:nowrap;font-size:6px;line-height:7px;color:#555;font-weight:500">留学生院</div><div style="position:absolute;left:145.15px;top:13px;width:27.25px;overflow:hidden;white-space:nowrap;font-size:6px;line-height:7px;color:#555;font-weight:500">团委</div><div style="position:absolute;left:173.4px;top:13px;width:27.25px;overflow:hidden;white-space:nowrap;font-size:6px;line-height:7px;color:#555;font-weight:500">智能工程学院</div><div style="position:absolute;left:201.65px;top:13px;width:27.25px;overflow:hidden;white-space:nowrap;font-size:6px;line-height:7px;color:#555;font-weight:500">马克思主义学院</div><div style="position:absolute;left:229.9px;top:13px;width:27.25px;overflow:hidden;white-space:nowrap;font-size:6px;line-height:7px;color:#555;font-weight:500">酒店管理学院</div><div style="position:absolute;left:258.15px;top:13px;width:27.25px;overflow:hidden;white-space:nowrap;font-size:6px;line-height:7px;color:#555;font-weight:500">建筑工程学院</div><div style="position:absolute;left:286.4px;top:13px;width:27.25px;overflow:hidden;white-space:nowrap;font-size:6px;line-height:7px;color:#555;font-weight:500">影视传媒学院</div><div style="position:absolute;left:314.65px;top:13px;width:27.25px;overflow:hidden;white-space:nowrap;font-size:6px;line-height:7px;color:#555;font-weight:500">教师发展中心</div><div style="position:absolute;left:342.9px;top:13px;width:27.25px;overflow:hidden;white-space:nowrap;font-size:6px;line-height:7px;color:#555;font-weight:500">商学院</div><div style="position:absolute;left:371.15px;top:13px;width:27.25px;overflow:hidden;white-space:nowrap;font-size:6px;line-height:7px;color:#555;font-weight:500">通识教育学院</div><div style="position:absolute;left:399.4px;top:13px;width:27.25px;overflow:hidden;white-space:nowrap;font-size:6px;line-height:7px;color:#555;font-weight:500">语言文化学院</div><div style="position:absolute;left:427.65px;top:13px;width:27.25px;overflow:hidden;white-space:nowrap;font-size:6px;line-height:7px;color:#555;font-weight:500">行政处</div><div style="position:absolute;left:455.9px;top:13px;width:27.25px;overflow:hidden;white-space:nowrap;font-size:6px;line-height:7px;color:#555;font-weight:500">校办</div><div style="position:absolute;left:484.15px;top:13px;width:27.25px;overflow:hidden;white-space:nowrap;font-size:6px;line-height:7px;color:#555;font-weight:500">孙校长</div><div style="position:absolute;left:512.4px;top:13px;width:53.5px;overflow:hidden;white-space:nowrap;font-size:6px;line-height:7px;color:#555;font-weight:500">新闻与传播学院</div>
<div style="position:absolute;left:30.65px;top:21.5px;width:27.6px;text-align:right;font-size:6px;line-height:7px;color:#555;font-weight:500">24</div><div style="position:absolute;left:58.9px;top:21.5px;width:27.6px;text-align:right;font-size:6px;line-height:7px;color:#555;font-weight:500">5</div><div style="position:absolute;left:87.15px;top:21.5px;width:27.6px;text-align:right;font-size:6px;line-height:7px;color:#555;font-weight:500">1</div><div style="position:absolute;left:115.4px;top:21.5px;width:27.6px;text-align:right;font-size:6px;line-height:7px;color:#555;font-weight:500">2</div><div style="position:absolute;left:143.65px;top:21.5px;width:27.6px;text-align:right;font-size:6px;line-height:7px;color:#555;font-weight:500">4</div><div style="position:absolute;left:171.9px;top:21.5px;width:27.6px;text-align:right;font-size:6px;line-height:7px;color:#555;font-weight:500">35</div><div style="position:absolute;left:200.15px;top:21.5px;width:27.6px;text-align:right;font-size:6px;line-height:7px;color:#555;font-weight:500">8</div><div style="position:absolute;left:228.4px;top:21.5px;width:27.6px;text-align:right;font-size:6px;line-height:7px;color:#555;font-weight:500">15</div><div style="position:absolute;left:256.65px;top:21.5px;width:27.6px;text-align:right;font-size:6px;line-height:7px;color:#555;font-weight:500">9</div><div style="position:absolute;left:284.9px;top:21.5px;width:27.6px;text-align:right;font-size:6px;line-height:7px;color:#555;font-weight:500">19</div><div style="position:absolute;left:313.15px;top:21.5px;width:27.6px;text-align:right;font-size:6px;line-height:7px;color:#555;font-weight:500">5</div><div style="position:absolute;left:341.4px;top:21.5px;width:27.6px;text-align:right;font-size:6px;line-height:7px;color:#555;font-weight:500">4</div><div style="position:absolute;left:369.65px;top:21.5px;width:27.6px;text-align:right;font-size:6px;line-height:7px;color:#555;font-weight:500">103</div><div style="position:absolute;left:397.9px;top:21.5px;width:27.6px;text-align:right;font-size:6px;line-height:7px;color:#555;font-weight:500">18</div><div style="position:absolute;left:426.15px;top:21.5px;width:27.6px;text-align:right;font-size:6px;line-height:7px;color:#555;font-weight:500">7</div><div style="position:absolute;left:454.4px;top:21.5px;width:27.6px;text-align:right;font-size:6px;line-height:7px;color:#555;font-weight:500">9</div><div style="position:absolute;left:482.65px;top:21.5px;width:27.6px;text-align:right;font-size:6px;line-height:7px;color:#555;font-weight:500">1</div><div style="position:absolute;left:510.9px;top:21.5px;width:27.6px;text-align:right;font-size:6px;line-height:7px;color:#555;font-weight:500">1</div><div style="position:absolute;left:539.15px;top:21.5px;width:27.6px;text-align:right;font-size:6px;line-height:7px;color:#555;font-weight:500">270</div>
</div>

<!-- mouse cursor -->
<svg class="abs" style="left:889px;top:286px" width="12" height="18" viewBox="0 0 12 18"><path d="M0.7 0.7V13.5L3.8 10.6L6.2 16L8.2 15.1L5.9 9.9H10.3Z" fill="#fff" stroke="#222" stroke-width=".9"/></svg>

<!-- vertical scrollbar + status bar icons (absolute screen coords) -->
<div id="vs">
  <div class="b" style="left:1112px;top:212px;width:8px;height:1.5px;background:#8d9199"></div>
  <svg class="b" style="left:1110.5px;top:216.5px" width="11" height="11" viewBox="0 0 11 11"><rect x="0.5" y="1.5" width="8" height="8.500" fill="#f2f4f7" stroke="#8a9099" stroke-width=".8"/><path d="M2 4H7M2 6.500H7" stroke="#9aa0aa" stroke-width=".7"/><circle cx="8" cy="3" r="2" fill="#e8ebf0" stroke="#8a9099" stroke-width=".7"/></svg>
  <div class="b" style="left:1110px;top:229px;width:14px;height:1px;background:#d0d4da"></div>
  <div class="b" style="left:1111.5px;top:235.5px;width:0;height:0;border-left:4.5px solid transparent;border-right:4.5px solid transparent;border-bottom:4.5px solid #4a4d52"></div>
  <div class="b" style="left:1109.5px;top:270.5px;width:14px;height:15.500px;background:#fbfcfd;border:1px solid #b4b9c1;border-radius:1.500px"></div>
  <div class="b" style="left:1114px;top:276.5px;width:5px;height:1px;background:#777"></div>
  <div class="b" style="left:1114px;top:279px;width:5px;height:1px;background:#777"></div>
  <div class="b" style="left:1111.5px;top:605px;width:0;height:0;border-left:4.5px solid transparent;border-right:4.5px solid transparent;border-top:4.5px solid #4a4d52"></div>
  <div class="b" style="left:1110px;top:614.5px;width:14px;height:1px;background:#cfd3d9"></div>
  <svg class="b" style="left:1113px;top:619.5px" width="6" height="7" viewBox="0 0 6 7"><path d="M0 3L3 0L6 3ZM0 6.500L3 3.500L6 6.500Z" fill="#2f7be0"/></svg>
  <svg class="b" style="left:1112.500px;top:634px" width="7" height="7" viewBox="0 0 7 7"><circle cx="3.500" cy="3.500" r="2.600" fill="#e9ecf1" stroke="#777" stroke-width="1"/></svg>
  <svg class="b" style="left:1113px;top:649px" width="6" height="7" viewBox="0 0 6 7"><path d="M0 0.500L3 3.500L6 0.500ZM0 4L3 7L6 4Z" fill="#2f7be0"/></svg>
  <!-- Tencent collapse handle -->
  <div class="b" style="left:1117px;top:365.5px;width:7px;height:35px;background:#8b8d91;border-radius:3px 0 0 3px"></div>
  <svg class="b" style="left:1119.5px;top:377.5px" width="6" height="11" viewBox="0 0 6 11"><path d="M0.800 0.800L5 5.500L0.800 10.200" fill="none" stroke="#fff" stroke-width="1.300"/></svg>

  <!-- status bar -->
  <div class="b" style="left:65.5px;top:663px;width:1px;height:15px;background:#c3c6cb"></div>
  <div class="b" style="left:131.5px;top:663px;width:1px;height:15px;background:#c3c6cb"></div>
  <div class="b" style="left:215px;top:663px;width:1px;height:15px;background:#c3c6cb"></div>
  <div class="b" style="left:247.500px;top:663px;width:1px;height:15px;background:#c3c6cb"></div>
  <svg class="b" style="left:136px;top:663.500px" width="15" height="13" viewBox="0 0 15 13"><path d="M1 8L6.500 5.500L13 8L7 11.500Z" fill="#5b8fd6" stroke="#2f5fa8" stroke-width=".7"/><path d="M1 8V9.500L7 13V11.500Z" fill="#dfe6f2" stroke="#8a9bb8" stroke-width=".5"/><path d="M13 8V9.500L7 13V11.500Z" fill="#c9d4e6" stroke="#8a9bb8" stroke-width=".5"/><path d="M8 1L13 6M13 1L8 6" stroke="#e0702a" stroke-width="1.600"/></svg>
  <div class="b" style="left:886.500px;top:662.500px;width:17px;height:16.500px;border:1px solid #efb947;border-radius:2px;background:linear-gradient(#fdeab0,#fbd672)"></div>
  <svg class="b" style="left:890px;top:665.500px" width="10" height="11" viewBox="0 0 10 11"><rect x="0.500" y="0.500" width="9" height="10" fill="#fafbfc" stroke="#8f7f5a" stroke-width=".8"/><path d="M2 3H8M2 5H8M2 7H8" stroke="#bbb" stroke-width=".6"/></svg>
  <svg class="b" style="left:906.500px;top:665.500px" width="11" height="11" viewBox="0 0 11 11"><path d="M0.500 1.500C2.500 0.500 4 0.800 5.500 2V10.500C4 9.300 2.500 9 0.500 10ZM10.500 1.500C8.500 0.500 7 0.800 5.500 2V10.500C7 9.300 8.500 9 10.500 10Z" fill="#f5f6f8" stroke="#6e737b" stroke-width=".8"/></svg>
  <svg class="b" style="left:921px;top:665.500px" width="12" height="11" viewBox="0 0 12 11"><rect x="0.500" y="0.500" width="9" height="8" fill="#f5f6f8" stroke="#6e737b" stroke-width=".8"/><circle cx="8.500" cy="7.500" r="2.800" fill="#3b7ad0" stroke="#25579e" stroke-width=".5"/></svg>
  <svg class="b" style="left:938.500px;top:666.500px" width="10" height="9" viewBox="0 0 10 9"><path d="M0 1H6M2 4.500H8M4 8H9" stroke="#666" stroke-width="1.200"/><path d="M8.500 1.500V7" stroke="#666" stroke-width="1"/></svg>
  <svg class="b" style="left:954px;top:666.500px" width="10" height="9" viewBox="0 0 10 9"><path d="M0 1H10M0 3.300H10M0 5.600H10M0 8H10" stroke="#666" stroke-width="1.300"/></svg>
  <div class="b" style="left:973px;top:664px;font-size:11.500px;line-height:14px;color:#333">120%</div>
  <svg class="b" style="left:1006.500px;top:664.500px" width="13" height="13" viewBox="0 0 13 13"><circle cx="6.500" cy="6.500" r="5.800" fill="#f7f8f9" stroke="#9a9ea5" stroke-width=".9"/><path d="M3.500 6.500H9.500" stroke="#555" stroke-width="1.300"/></svg>
  <div class="b" style="left:1020px;top:671px;width:88px;height:1px;background:#c9ccd1"></div>
  <svg class="b" style="left:1062px;top:665px" width="8" height="12" viewBox="0 0 8 12"><path d="M0.500 0.500H7.500V8L4 11.500L0.500 8Z" fill="#f4f5f7" stroke="#777b83" stroke-width=".9"/></svg>
  <svg class="b" style="left:1108px;top:664.500px" width="13" height="13" viewBox="0 0 13 13"><circle cx="6.500" cy="6.500" r="5.800" fill="#f7f8f9" stroke="#9a9ea5" stroke-width=".9"/><path d="M3.500 6.500H9.500M6.500 3.500V9.500" stroke="#555" stroke-width="1.300"/></svg>
</div>

<!-- side panel -->
<div id="side">
<div class="tile" style="top:0px"><svg class="avs" style="left:77.500px;top:24.500px" width="62" height="62" viewBox="0 0 62 62"><defs><filter id="bc1" x="-10%" y="-10%" width="120%" height="120%"><feGaussianBlur stdDeviation="0.55"/></filter><clipPath id="c1"><circle cx="31" cy="31" r="30.700"/></clipPath></defs><g clip-path="url(#c1)"><g filter="url(#bc1)"><rect width="62" height="62" fill="#9c4a36"/><rect y="0" width="62" height="14" fill="#cfd0d2"/><path d="M6 3H56M10 5.500H52" stroke="#8d8f92" stroke-width="1"/><rect x="0" y="36" width="8" height="26" fill="#b8653f"/><rect x="8" y="36" width="6.500" height="26" fill="#a9abae"/><rect x="14.500" y="36" width="13" height="26" fill="#c58e68"/><rect x="18" y="41" width="6" height="14" fill="#dcb68a"/><rect x="27.500" y="36" width="3" height="26" fill="#3e6a9a"/><rect x="30.500" y="36" width="3.500" height="26" fill="#1c1c1f"/><rect x="34" y="36" width="7" height="26" fill="#a32f22"/><rect x="41" y="36" width="21" height="26" fill="#a9573f"/><path d="M44 42L52 47M46 52L55 44" stroke="#d89a6a" stroke-width="1.500"/></g></g></svg><div class="nb"><svg class="mic" style="left:1.500px;top:3px" width="12" height="13" viewBox="0 0 12 13"><rect x="0.300" y="0.300" width="11" height="9" rx="1.200" fill="#fff"/><path d="M3.300 6.800C3.500 4.800 5 3.800 7 3.800V2.500L9.300 4.600L7 6.700V5.400C5.500 5.300 4.300 5.800 3.300 6.800Z" fill="#0d0f10"/><rect x="2.800" y="11" width="6" height="1.300" fill="#fff"/></svg><svg class="mic" style="left:18.5px;top:3.5px" width="11" height="13" viewBox="0 0 11 13"><rect x="3.6" y="0.6" width="4" height="7.2" rx="2" fill="#fff"/><path d="M1.6 5.600C1.600 10.200 9.600 10.200 9.600 5.600" fill="none" stroke="#fff" stroke-width="1.100"/><path d="M5.600 9.300V11.800M3.600 12H7.600" stroke="#fff" stroke-width="1.100"/><path d="M10.300 0.800L0.700 10.800" stroke="#e2482d" stroke-width="1.300"/></svg><span style="left:33.500px">雪亭的屏幕共享</span></div></div>
<div class="tile" style="top:122px"><div class="av blue">芳静</div><div class="nb"><svg class="mic" style="left:4.5px;top:3.5px" width="11" height="13" viewBox="0 0 11 13"><rect x="3.6" y="0.6" width="4" height="7.2" rx="2" fill="#fff"/><path d="M1.6 5.600C1.600 10.200 9.600 10.200 9.600 5.600" fill="none" stroke="#fff" stroke-width="1.100"/><path d="M5.600 9.300V11.800M3.600 12H7.600" stroke="#fff" stroke-width="1.100"/><path d="M10.300 0.800L0.700 10.800" stroke="#e2482d" stroke-width="1.300"/></svg><span style="left:19.500px">杜芳静</span></div></div>
<div class="tile" style="top:244px"><svg class="avs" style="left:78.500px;top:24.500px" width="62" height="62" viewBox="0 0 62 62"><defs><filter id="bc3" x="-10%" y="-10%" width="120%" height="120%"><feGaussianBlur stdDeviation="0.55"/></filter><clipPath id="c3"><circle cx="30.700" cy="31" r="30.600"/></clipPath></defs><g clip-path="url(#c3)"><g filter="url(#bc3)"><rect width="62" height="62" fill="#c4c5c8"/><rect width="62" height="33" fill="#77787b"/><path d="M0 8L25 0V30L0 34Z" fill="#a3a4a7"/><path d="M2 14V33M6 12V32M10 10V31M14 8V31M18 6V30M22 4V30" stroke="#5a5b5e" stroke-width="1.300"/><rect x="26.300" y="0" width="14" height="11.500" fill="#f4f5f5"/><rect x="25" y="11.500" width="17" height="18" fill="#55565a"/><path d="M25 13H42" stroke="#8b8c8f" stroke-width="1.500"/><path d="M40 0L62 8V36L40 30Z" fill="#6c6d70"/><rect x="57" y="20" width="5" height="17" fill="#232326"/><rect x="48" y="24" width="3" height="10" fill="#c9c6c0"/><rect x="53" y="24" width="3" height="11" fill="#c9c6c0"/><circle cx="2" cy="29.500" r="2.600" fill="#2b5c9c"/><path d="M0 36L20 31H42L62 38V62H0Z" fill="#c6c7ca"/><path d="M39.300 36L51.500 52" stroke="#dcc27a" stroke-width="1.600"/><circle cx="34.500" cy="21.500" r="3" fill="#16161a"/><path d="M31.500 24.500H38.500L38 37H31Z" fill="#1b1b1f"/><path d="M31 37H37.500L38.500 60H27L21.500 51.500Z" fill="#bf5262"/><path d="M22 52L27 59H38" stroke="#a8643a" stroke-width="1.200" fill="none"/></g></g></svg><div class="nb"><div class="host">主持人</div><svg class="mic" style="left:47px;top:3.5px" width="11" height="13" viewBox="0 0 11 13"><rect x="3.6" y="0.6" width="4" height="7.2" rx="2" fill="#fff"/><path d="M1.6 5.600C1.600 10.200 9.600 10.200 9.600 5.600" fill="none" stroke="#fff" stroke-width="1.100"/><path d="M5.600 9.300V11.800M3.600 12H7.600" stroke="#fff" stroke-width="1.100"/><path d="M10.300 0.800L0.700 10.800" stroke="#e2482d" stroke-width="1.300"/></svg><span style="left:62.500px">田司宇</span></div></div>
<div class="tile" style="top:366px"><svg class="avs" style="left:78px;top:24.500px" width="62" height="62" viewBox="0 0 62 62"><defs><filter id="bc4" x="-10%" y="-10%" width="120%" height="120%"><feGaussianBlur stdDeviation="0.55"/></filter><clipPath id="c4"><circle cx="31" cy="31" r="30"/></clipPath></defs><circle cx="31" cy="31" r="31" fill="#f3f3f4"/><g clip-path="url(#c4)"><g filter="url(#bc4)"><rect width="62" height="62" fill="#d8d8da"/><rect width="14.500" height="62" fill="#8c8c8f"/><rect x="12.800" width="1.700" height="62" fill="#4e4e52"/><path d="M42 18C52 14 60 18 62 26V40H48Z" fill="#cdbeb3"/><ellipse cx="34.500" cy="18" rx="6" ry="8" fill="#d5a48e"/><path d="M27.500 14C27 5 42 4 41.500 13.500C38 9.500 31 10 27.500 14Z" fill="#1d2025"/><path d="M15.500 38C17 28 24 25 30 24.500H39C46 25 51 29 52.500 40L49 42V56H20V42Z" fill="#3e3e41"/><path d="M13 42L19 40L20 56H13Z" fill="#d6a890"/><rect x="10" y="54" width="40" height="8" fill="#2a2b2e"/><rect x="41" y="42.700" width="21" height="20" rx="1.500" fill="#f6f6f6"/><rect x="43.500" y="45" width="19" height="17" fill="#e8421e"/><circle cx="46.800" cy="50.300" r="1.700" fill="#f6d23c"/><circle cx="51" cy="48" r=".7" fill="#f6d23c"/><circle cx="52" cy="50.500" r=".7" fill="#f6d23c"/></g></g></svg><div class="nb"><svg class="mic" style="left:4.5px;top:3.5px" width="11" height="13" viewBox="0 0 11 13"><rect x="3.6" y="0.6" width="4" height="7.2" rx="2" fill="#fff"/><path d="M1.6 5.600C1.600 10.200 9.600 10.200 9.600 5.600" fill="none" stroke="#fff" stroke-width="1.100"/><path d="M5.600 9.300V11.800M3.600 12H7.600" stroke="#fff" stroke-width="1.100"/><path d="M10.300 0.800L0.700 10.800" stroke="#e2482d" stroke-width="1.300"/></svg><span style="left:19.500px">朱元华</span></div></div>
<div class="tile" style="top:488px"><div class="av blue">作纪</div><div class="nb"><svg class="mic" style="left:4.5px;top:3.5px" width="11" height="13" viewBox="0 0 11 13"><rect x="3.6" y="0.6" width="4" height="7.2" rx="2" fill="#fff"/><path d="M1.6 5.600C1.600 10.200 9.600 10.200 9.600 5.600" fill="none" stroke="#fff" stroke-width="1.100"/><path d="M5.600 9.300V11.800M3.600 12H7.600" stroke="#fff" stroke-width="1.100"/><path d="M10.300 0.800L0.700 10.800" stroke="#e2482d" stroke-width="1.300"/></svg><span style="left:19.500px">李作纪</span></div></div>
<div id="t1b"></div>
<div id="more"><svg width="12" height="7" viewBox="0 0 12 7" style="position:absolute;left:41px;top:10px"><path d="M0.800 0.800L6 5.800L11.200 0.800" fill="none" stroke="#fff" stroke-width="1.400"/></svg></div>
</div>
<div id="tip">正在讲话: 原所先;<svg width="38" height="21" viewBox="0 0 38 21" style="position:absolute;left:162.500px;top:6.500px"><path d="M1 13L12 1L18 8L12 14.500L7.500 19.500Z" fill="#484b4f"/><path d="M13 13.500L25 1L37 13.500L32 19.500L25 12.500L18.500 19.500Z" fill="#3f4246"/><path d="M12 1L18 8L13 13.500L7.500 19.500L1 13Z" fill="#4d5054" opacity=".6"/></svg></div>
</body>
</html>
